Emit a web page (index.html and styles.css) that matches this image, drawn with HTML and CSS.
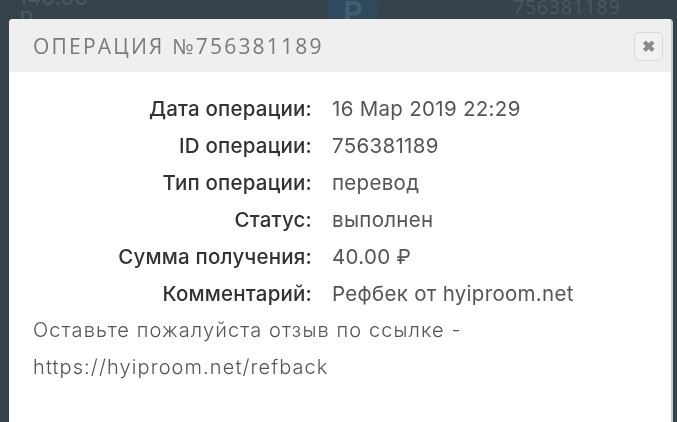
FILE: index.html
```html
<!DOCTYPE html>
<html lang="ru">
<head>
  <meta charset="UTF-8" />
  <meta name="viewport" content="width=device-width, initial-scale=1.0"/>
  <title>Операция №756381189</title>
  <link rel="stylesheet" href="styles.css">
</head>
<body>

  <div class="page">
    <div class="page-row">
      <div class="page-sum">140.00<br>₽</div>
      <div class="page-dash">—</div>
      <div class="page-logo">P</div>
      <div class="page-id">756381189</div>
    </div>
  </div>

  <div class="overlay">
    <div class="modal">
      <div class="modal-head">
        <h3>ОПЕРАЦИЯ №756381189</h3>
        <button class="close">&#10006;</button>
      </div>
      <div class="modal-body">
        <div class="info">
          <span class="lbl">Дата операции:</span>
          <span class="val">16 Мар 2019 22:29</span>
          <span class="lbl">ID операции:</span>
          <span class="val">756381189</span>
          <span class="lbl">Тип операции:</span>
          <span class="val">перевод</span>
          <span class="lbl">Статус:</span>
          <span class="val">выполнен</span>
          <span class="lbl">Сумма получения:</span>
          <span class="val">40.00 ₽</span>
          <span class="lbl">Комментарий:</span>
          <span class="val">Рефбек от hyiproom.net</span>
        </div>
        <p class="note">Оставьте пожалуйста отзыв по ссылке -<br>https://hyiproom.net/refback</p>
      </div>
    </div>
  </div>

</body>
</html>
```

FILE: styles.css
```css
html, body {
  margin: 0;
  height: 100%;
}
body {
  font-family: Inter, "Noto Sans", sans-serif;
  background-color: #36434a;
  overflow: hidden;
}
.page-row {
  display: flex;
  align-items: flex-start;
  height: 40px;
  color: #4a585f;
  font-size: 22px;
  line-height: 22px;
  margin-top: -14px;
}
.page-sum {
  margin-left: 18px;
  width: 175px;
}
.page-dash {
  width: 134px;
  padding-top: 26px;
  font-size: 12px;
}
.page-logo {
  width: 52px;
  height: 52px;
  margin-top: -4px;
  border-radius: 50%;
  background-color: #2f4a5c;
  color: #3f5e72;
  font-weight: bold;
  font-size: 30px;
  text-align: center;
  line-height: 60px;
}
.page-id {
  margin-left: 134px;
  padding-top: 10px;
  font-family: "Open Sans", sans-serif;
  letter-spacing: 0.5px;
  font-size: 20px;
}
.overlay {
  position: fixed;
  inset: 0;
  padding: 19px 4px 0 9px;
}
.modal {
  background-color: #fff;
  border-radius: 4px 4px 0 0;
  border-right: 2px solid #c9cccd;
  height: 420px;
  overflow: hidden;
}
.modal-head {
  display: flex;
  align-items: center;
  justify-content: space-between;
  height: 53px;
  padding: 0 8px 0 24px;
  background-color: #efefef;
}
.modal-head h3 {
  margin: 0;
  font-family: "Open Sans", sans-serif;
  font-weight: normal;
  font-size: 21px;
  letter-spacing: 2.2px;
  color: #7a7a7a;
}
.close {
  width: 29px;
  height: 29px;
  padding: 0;
  margin-top: 2px;
  border: 1px solid #d8d8d8;
  border-radius: 5px;
  background-color: #f1f1f1;
  color: #8a8a8a;
  font-size: 16px;
  font-weight: bold;
  cursor: pointer;
}
.modal-body {
  padding: 18px 24px 0 24px;
}
.info {
  display: grid;
  grid-template-columns: 279px auto;
  column-gap: 20px;
  font-size: 20.5px;
  line-height: 37px;
}
.lbl {
  text-align: right;
  color: #333;
  font-weight: 500;
  letter-spacing: 0.2px;
}
.val {
  color: #555;
  letter-spacing: 0.3px;
}
.note {
  margin: 0;
  font-size: 20px;
  line-height: 37px;
  color: #555;
  font-weight: 300;
  letter-spacing: 1.1px;
}
```
